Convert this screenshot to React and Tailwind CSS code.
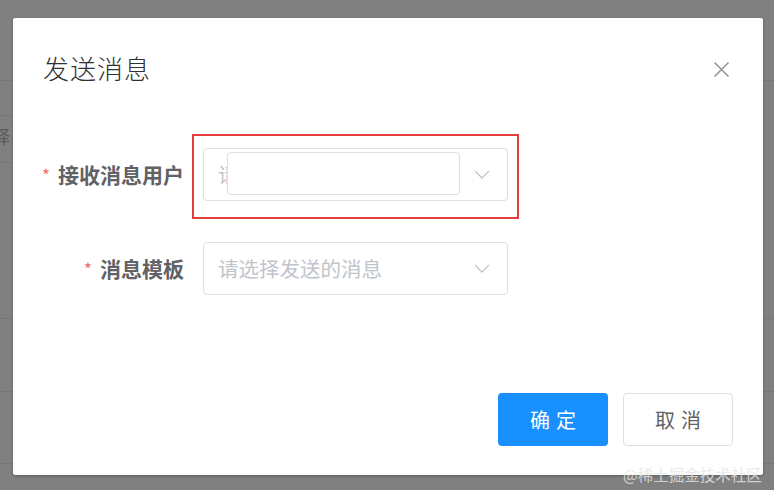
import React from "react";

const font = { fontFamily: '"Noto Sans CJK SC", "Noto Sans", sans-serif' };

function Chevron() {
  return (
    <svg width="16" height="9" viewBox="0 0 16 9" fill="none" className="shrink-0">
      <path d="M1 1 L8 8 L15 1" stroke="#c0c4cc" strokeWidth="1.3" />
    </svg>
  );
}

export default function App() {
  return (
    <div
      className="relative w-[774px] h-[490px] overflow-hidden bg-[#808080]"
      style={font}
    >
      {/* background page lines */}
      <div className="absolute left-0 top-[80px] w-full h-px bg-[#767878]" />
      <div className="absolute left-0 top-[115px] w-[14px] h-px bg-[#767878]" />
      <div className="absolute left-0 top-[162px] w-[14px] h-px bg-[#767878]" />
      <div className="absolute left-0 top-[318px] w-full h-px bg-[#767878]" />
      <div className="absolute left-0 top-[391px] w-full h-px bg-[#767878]" />
      <div className="absolute left-0 top-[463px] w-full h-px bg-[#767878]" />
      <div className="absolute left-[-8px] top-[124px] text-[18px] leading-[24px] text-[#5a5a5a]">
        择
      </div>

      {/* dialog */}
      <div className="absolute left-[13px] top-[18px] w-[750px] h-[457px] bg-white rounded-[2px] shadow-[0_1px_3px_rgba(0,0,0,0.3)] flex flex-col">
        <div className="flex items-start justify-between pl-[30px] pr-[33px] pt-[32px]">
          <div className="text-[26px] leading-[36px] text-[#303133] font-light tracking-[1px]">
            发送消息
          </div>
          <svg width="17" height="17" viewBox="0 0 17 17" className="mt-[11px]">
            <path d="M1.5 1.5 L15.5 15.5 M15.5 1.5 L1.5 15.5" stroke="#909399" strokeWidth="1.5" />
          </svg>
        </div>

        <div className="flex flex-col pt-[62px]">
          {/* row 1 */}
          <div className="relative flex items-center h-[53px]">
            <div className="w-[190px] flex items-center justify-end pr-[19px] text-[21px] font-bold text-[#606266]">
              <span className="text-[#f56c6c] text-[17px] mr-[8px] font-normal">*</span>
              接收消息用户
            </div>
            <div className="relative w-[305px] h-[53px] border border-[#dcdfe6] rounded-[4px] flex items-center justify-between pl-[14px] pr-[17px]">
              <span className="text-[20px] text-[#c0c4cc]">请选择用户</span>
              <Chevron />
              <div className="absolute left-[23px] top-[3px] w-[233px] h-[43px] bg-white border border-[#dcdfe6] rounded-[4px]" />
            </div>
            <div className="absolute left-[179px] top-[-14px] w-[327px] h-[85px] border-2 border-[#e43d3d]" />
          </div>

          {/* row 2 */}
          <div className="flex items-center h-[53px] mt-[41px]">
            <div className="w-[190px] flex items-center justify-end pr-[19px] text-[21px] font-bold text-[#606266]">
              <span className="text-[#f56c6c] text-[17px] mr-[8px] font-normal">*</span>
              消息模板
            </div>
            <div className="w-[305px] h-[53px] border border-[#dcdfe6] rounded-[4px] flex items-center justify-between pl-[14px] pr-[17px]">
              <span className="text-[20.5px] text-[#c0c4cc]">请选择发送的消息</span>
              <Chevron />
            </div>
          </div>
        </div>

        <div className="mt-auto flex justify-end gap-[15px] pr-[30px] pb-[29px]">
          <button className="w-[110px] h-[53px] rounded-[4px] bg-[#1890ff] text-white text-[20px] tracking-[6px] pl-[6px]">
            确定
          </button>
          <button className="w-[110px] h-[53px] rounded-[4px] bg-white border border-[#dcdfe6] text-[#606266] text-[20px] tracking-[6px] pl-[6px]">
            取消
          </button>
        </div>
      </div>

      {/* watermark */}
      <div className="absolute left-[623px] top-[462px] text-[15.5px] leading-[24px] text-[#e6e6e6] opacity-80 whitespace-nowrap">
        @稀土掘金技术社区
      </div>
    </div>
  );
}
